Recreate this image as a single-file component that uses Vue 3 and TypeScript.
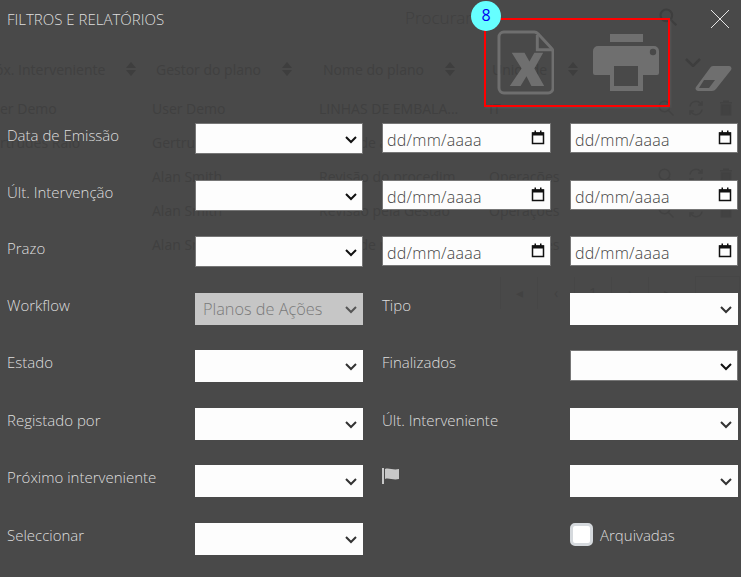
<script setup lang="ts">
const dateRows = ['Data de Emissão', 'Últ. Intervenção', 'Prazo'];
const fieldRows = [
  { label: 'Workflow', value: 'Planos de Ações', disabled: true, other: 'Tipo', flag: false, lined: false },
  { label: 'Estado', value: '', disabled: false, other: 'Finalizados', flag: false, lined: true },
  { label: 'Registado por', value: '', disabled: false, other: 'Últ. Interveniente', flag: false, lined: false },
  { label: 'Próximo interveniente', value: '', disabled: false, other: '', flag: true, lined: false },
];
const headers = [
  { t: 'óx. Interveniente', w: 161 },
  { t: 'Gestor do plano', w: 167 },
  { t: 'Nome do plano', w: 169 },
  { t: 'Unidade', w: 85 },
];
const rows = [
  { a: 'er Demo', b: 'User Demo', c: 'LINHAS DE EMBALA...', d: 'IT' },
  { a: 'rtrudes Raio', b: 'Gertrudes Raio', c: 'Plano de ação - parag...', d: 'IT' },
  { a: '', b: 'Alan Smith', c: 'Revisão do procedim...', d: 'Operações' },
  { a: '', b: 'Alan Smith', c: 'Revisão pela Gestão', d: 'Operações' },
  { a: '', b: 'Alan Smith', c: 'Plano de melhoria - o...', d: 'Operações' },
];
const pages = ['◂', '‹', '1', '›', '▸'];
</script>

<template>
  <div class="page">
    <div class="under">
      <div class="search"><span>Procurar</span>
        <svg class="mag" viewBox="0 0 24 24"><circle cx="10" cy="10" r="7"/><path d="M15 15l7 7"/></svg>
      </div>
      <div class="thead">
        <div v-for="h in headers" :key="h.t" class="th" :style="{ width: h.w + 'px' }">
          <span>{{ h.t }}</span>
          <svg class="sort" viewBox="0 0 12 16"><path d="M6 1l5 6H1zM6 15l-5-6h10z"/></svg>
        </div>
        <svg class="th-chev" viewBox="0 0 16 9"><path d="M1 1l7 7 7-7"/></svg>
      </div>
      <div v-for="r in rows" :key="r.b + r.c" class="tr">
        <span class="c1">{{ r.a }}</span><span class="c2">{{ r.b }}</span><span class="c3">{{ r.c }}</span><span class="c4">{{ r.d }}</span>
        <span class="acts">
          <svg viewBox="0 0 24 24"><circle cx="10" cy="10" r="7"/><path d="M15 15l7 7"/></svg>
          <svg viewBox="0 0 24 24"><path d="M4 10a8 8 0 0 1 14-4l2 2M20 14a8 8 0 0 1-14 4l-2-2M20 3v5h-5M4 21v-5h5"/></svg>
          <svg class="trash" viewBox="0 0 24 24"><path d="M6 8h12v13H6zM4 5h16M9 5V3h6v2"/></svg>
        </span>
      </div>
      <div class="pager">
        <span v-for="p in pages" :key="p">{{ p }}</span>
        <i></i>
      </div>
    </div>

    <div class="dialog">
      <header class="top">
        <h1>FILTROS E RELATÓRIOS</h1>
        <svg class="close" viewBox="0 0 20 20"><path d="M1 1l18 18M19 1L1 19"/></svg>
      </header>

      <div class="tools">
        <span class="badge">8</span>
        <svg class="xls" viewBox="0 0 58 66">
          <path class="outline" d="M7 2h31q2 0 4 2l13 14q2 2 2 4v37a5 5 0 0 1-5 5H7a5 5 0 0 1-5-5V7a5 5 0 0 1 5-5z"/>
          <path class="outline" d="M41 5v15h15"/>
          <path class="solid" d="M15 23h13l5 9 5-9h9L38 39l10 18H35l-5-10-6 10H13l12-18z"/>
        </svg>
        <svg class="printer" viewBox="0 0 66 57">
          <path class="solid" d="M17 0h33v8H17zM5 12h56a5 5 0 0 1 5 5v22a2 2 0 0 1-2 2H50v16H17V41H2a2 2 0 0 1-2-2V17a5 5 0 0 1 5-5z"/>
          <path d="M21 32h24v20H21z" fill="#494949"/>
          <circle cx="60" cy="18" r="3.2" fill="#494949"/>
        </svg>
      </div>
      <svg class="eraser" viewBox="0 0 37 25">
        <path d="M15 2a4 4 0 0 1 3-2h16a2.500 2.500 0 0 1 2 4L21 23a5 5 0 0 1-4 2H3a2.500 2.500 0 0 1-2-4z" fill="#6f6f6f"/>
        <path d="M9 14h11l-6 8H4z" fill="#494949"/>
      </svg>

      <div class="form">
        <template v-for="l in dateRows" :key="l">
          <label class="lab">{{ l }}</label>
          <div class="sel lined"><svg class="chev strong" viewBox="0 0 12 8"><path d="M1 1l5 5 5-5"/></svg></div>
          <div class="date">dd/mm/aaaa<svg class="cal" viewBox="0 0 14 14"><path d="M1.500 2.500h11v10.500h-11z"/><path class="calbar" d="M1 2h12v3H1zM3.500 0h1.500v2H3.500zM9 0h1.500v2H9z"/></svg></div>
          <div class="date d2">dd/mm/aaaa<svg class="cal" viewBox="0 0 14 14"><path d="M1.500 2.500h11v10.500h-11z"/><path class="calbar" d="M1 2h12v3H1zM3.500 0h1.500v2H3.500zM9 0h1.500v2H9z"/></svg></div>
        </template>
        <template v-for="f in fieldRows" :key="f.label">
          <label class="lab">{{ f.label }}</label>
          <div class="sel" :class="{ off: f.disabled }">{{ f.value }}<svg class="chev" viewBox="0 0 12 8"><path d="M1 1l5 5 5-5"/></svg></div>
          <label class="lab">
            <svg v-if="f.flag" class="flag" viewBox="0 0 17 16"><path d="M0 0h2v16H0zM3 1c4-1.500 8 1.500 14 0v10c-6 1.500-10-1.500-14 0z"/></svg>
            <template v-else>{{ f.other }}</template>
          </label>
          <div class="sel" :class="{ lined: f.lined }"><svg class="chev" :class="{ strong: f.lined }" viewBox="0 0 12 8"><path d="M1 1l5 5 5-5"/></svg></div>
        </template>
        <label class="lab">Seleccionar</label>
        <div class="sel"><svg class="chev" viewBox="0 0 12 8"><path d="M1 1l5 5 5-5"/></svg></div>
        <span></span>
        <label class="check"><span class="box"></span>Arquivadas</label>
      </div>
    </div>
  </div>
</template>

<style>
html, body { margin: 0; background: #494949; }
</style>

<style scoped>
.page {
  position: relative;
  width: 741px;
  height: 577px;
  overflow: hidden;
  background: #494949;
  font-family: "Open Sans", "Noto Sans", sans-serif;
  font-weight: 300;
  font-size: 15px;
  color: #dedede;
}
.under { position: absolute; inset: 0; color: #404040; font-size: 14px; font-weight: 400; }
.search {
  display: flex; justify-content: space-between; align-items: center;
  margin: 4px 63px 0 405px; height: 26px; font-size: 17px; font-weight: 300;
}
.mag { width: 20px; height: 20px; fill: none; stroke: #3e3e3e; stroke-width: 2.5; }
.thead { display: flex; margin-top: 24px; height: 30px; align-items: center; position: relative; }
.th { display: flex; gap: 20px; align-items: center; white-space: nowrap; flex: none; }
.th:first-child { margin-left: -5px; }
.sort { width: 12px; height: 16px; fill: #3e3e3e; flex: none; }
.th-chev {
  position: absolute; left: 685px; top: 4px; width: 16px; height: 9px;
  fill: none; stroke: #3e3e3e; stroke-width: 2.500;
}
.tr { display: flex; height: 34px; align-items: center; white-space: nowrap; position: relative; }
.tr:nth-child(3) { margin-top: 7px; }
.c1 { width: 152px; flex: none; }
.c2 { width: 167px; flex: none; }
.c3 { width: 170px; flex: none; }
.c4 { flex: none; }
.acts { position: absolute; left: 657px; top: 8px; display: flex; gap: 12px; }
.acts svg { width: 18px; height: 18px; fill: none; stroke: #424242; stroke-width: 2; }
.acts .trash { fill: #424242; }
.pager {
  display: flex; margin: 16px 0 0 500px; height: 32px; align-items: center; position: relative;
}
.pager span { width: 36px; text-align: center; border-left: 1px solid #464646; line-height: 32px; color: #424242; }
.pager i { position: absolute; left: 195px; top: -1px; width: 43px; height: 30px; border: 1px solid #464646; }

.dialog { position: absolute; inset: 0; }
.top { display: flex; justify-content: space-between; align-items: center; padding: 9px 11px 0 7px; }
h1 { margin: 0; font-size: 15px; font-weight: 300; color: #dedede; }
.close { width: 20px; height: 20px; fill: none; stroke: #e6e6e6; stroke-width: 1; }

.tools {
  position: absolute; left: 484px; top: 18px; width: 186px; height: 89px;
  box-sizing: border-box; border: 2px solid #f00;
  display: flex; align-items: flex-start; gap: 39px; padding: 10px 0 0 11px;
  box-shadow: 1px 1px 2px rgba(255,255,255,.07);
}
.badge {
  position: absolute; left: -15px; top: -19px; width: 30px; height: 30px; border-radius: 50%;
  background: #66ffff; color: #0000ee; text-align: center; line-height: 29px; font-size: 16px;
  font-weight: 400;
}
.xls { width: 57px; height: 65px; flex: none; }
.printer { width: 66px; height: 57px; flex: none; margin-top: 4px; }
.outline { fill: none; stroke: #6f6f6f; stroke-width: 3; }
.solid { fill: #6f6f6f; }
.eraser { position: absolute; left: 695px; top: 66px; width: 37px; height: 25px; }

.form {
  position: absolute; left: 7px; top: 123px;
  display: grid;
  grid-template-columns: 188px 187px 188px 168px;
  grid-template-rows: 57px 56px 57px 57px 58px 57px 58px 57px;
}
.lab { line-height: 20px; margin-top: 2px; white-space: nowrap; }
.sel {
  position: relative; box-sizing: border-box; width: 168px; height: 32px;
  background: rgba(255,255,255,.99); color: #000;
}
.sel.lined { border: 1px solid #767676; height: 31px; }
.sel.lined .chev { top: 12px; right: 5px; }
.sel.off {
  background: #c6c6c6; color: #7a7a7a; font-size: 16.300px; font-weight: 300;
  line-height: 33px; padding-left: 8px;
}
.chev {
  position: absolute; right: 6px; top: 13px; width: 12px; height: 8px;
  fill: none; stroke: #333; stroke-width: 2;
}
.chev.strong { stroke: #111; }
.off .chev { stroke: #555; }
.date {
  position: relative; box-sizing: border-box; width: 169px; height: 30px;
  background: rgba(255,255,255,.99); border: 1px solid #767676; color: #444;
  font-size: 16px; letter-spacing: .25px; line-height: 32px; padding-left: 4px;
}
.date.d2 { width: 168px; }
.cal { position: absolute; right: 5px; top: 6px; width: 14px; height: 15px; fill: none; stroke: #111; stroke-width: 1.500; }
.calbar { fill: #111; stroke: none; }
.flag { width: 17px; height: 16px; fill: #c8c8c8; display: block; margin-top: 1px; }
.check { display: flex; align-items: flex-start; gap: 7px; height: 31px; line-height: 25px; }
.box { box-sizing: border-box; width: 23px; height: 23px; border: 3px solid #d5d9dd; border-radius: 5px; background: #fff; }
</style>
